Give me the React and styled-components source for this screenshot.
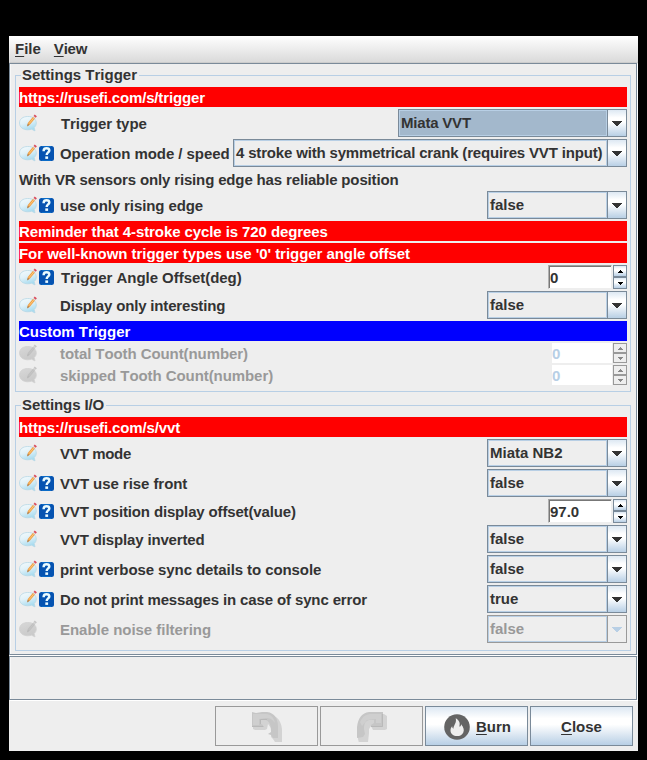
import React from "react";
import styled, { createGlobalStyle, css } from "styled-components";

const Global = createGlobalStyle`
  * { box-sizing: border-box; }
  body { margin: 0; background: #000; }
`;

const metal = "linear-gradient(#dde8f3 0%, #fff 30%, #fff 46%, #b8cfe5 100%)";

const Screen = styled.div`
  width: 647px;
  height: 760px;
  padding: 36px 9px 9px;
  background: #000;
  font: bold 15px/20px "Liberation Sans", Arial, sans-serif;
  font-kerning: none;
  color: #333;
`;
const Frame = styled.main`
  width: 629px;
  height: 715px;
  display: flex;
  flex-direction: column;
  background: #eee;
`;
const MenuBar = styled.nav`
  height: 27px;
  display: flex;
  gap: 13px;
  padding: 3px 6px 0;
  background: linear-gradient(#fff, #dadada);
  border-bottom: 1px solid #ccc;
`;
const MenuItem = styled.span`
  letter-spacing: ${(p) => p.$ls || 0}px;
`;
const Key = styled.span`
  text-decoration: underline;
  text-decoration-thickness: 1px;
  text-underline-offset: 2px;
`;
const Etched = styled.section`
  height: ${(p) => p.$h}px;
  width: 628px;
  border: 1px solid #7a8a99;
  box-shadow: 1px 1px 0 #fff, inset 1px 0 0 #f8f8f8;
  margin-bottom: 1px;
  padding: 0 5px;
  flex: none;
`;
const Group = styled.fieldset`
  width: 616px;
  min-width: 0;
  height: ${(p) => p.$h}px;
  margin: ${(p) => p.$mt}px 0 0;
  padding: 2px 3px 0;
  border: 1px solid #b8cfe5;
  display: block;
`;
const Legend = styled.legend`
  margin-left: 2px;
  padding: 0 2px 0 1px;
  height: 20px;
  white-space: nowrap;
  letter-spacing: ${(p) => p.$ls || 0}px;
`;
const Rows = styled.div`
  display: flex;
  flex-direction: column;
  gap: 2px;
`;
const Banner = styled.div`
  height: 20px;
  padding-top: 1px;
  color: #fff;
  white-space: nowrap;
  background: ${(p) => (p.$blue ? "#00f" : "#f00")};
  letter-spacing: ${(p) => p.$ls || 0}px;
`;
const Note = styled.div`
  height: 20px;
  padding-top: 1px;
  letter-spacing: ${(p) => p.$ls || 0}px;
`;
const Row = styled.div`
  display: flex;
  align-items: center;
  height: ${(p) => p.$h}px;
`;
const Icons = styled.div`
  width: 41px;
  flex: none;
  display: flex;
  align-items: center;
  gap: 2px;
  svg { display: block; flex: none; }
`;
const Label = styled.label`
  flex: 1;
  min-width: 0;
  white-space: nowrap;
  padding-top: 2px;
  padding-left: ${(p) => p.$pl || 0}px;
  color: ${(p) => (p.$off ? "#999" : "#333")};
  letter-spacing: ${(p) => p.$ls || 0}px;
`;
const Combo = styled.div`
  flex: none;
  width: ${(p) => p.$w}px;
  height: 28px;
  display: flex;
  border: 1px solid ${(p) => (p.$off ? "#999" : "#7a8a99")};
`;
const ComboText = styled.span`
  flex: 1;
  min-width: 0;
  padding: 2px 0 0 1px;
  border: 1px solid #b8cfe5;
  white-space: nowrap;
  color: ${(p) => (p.$off ? "#999" : "#333")};
  background: ${(p) => (p.$focus ? "#a3b8cc" : "#eee")};
  letter-spacing: ${(p) => p.$ls || 0}px;
`;
const ComboArrow = styled.span`
  width: 19px;
  flex: none;
  display: flex;
  align-items: center;
  justify-content: center;
  border-left: 1px solid ${(p) => (p.$off ? "#999" : "#7a8a99")};
  background: ${(p) => (p.$off ? "#eee" : metal)};
`;
const Spinner = styled.div`
  flex: none;
  display: flex;
  gap: 1px;
  height: ${(p) => (p.$off ? 20 : 24)}px;
`;
const Field = styled.span`
  width: ${(p) => (p.$off ? 60 : 64)}px;
  background: #fff;
  line-height: 20px;
  color: #333;
  ${(p) =>
    p.$off
      ? css`color: #b8cfe5; padding-top: 1px;`
      : css`
          padding: 2px 0 0;
          border: solid;
          border-width: 1px;
          border-color: #a0a0a0 #eee #eee #b0b0b0;
          box-shadow: inset 1px 1px 0 #777;
          text-indent: 1px;
        `}
`;
const Steps = styled.span`
  width: 14px;
  display: flex;
  flex-direction: column;
`;
const Step = styled.span`
  flex: 1;
  display: flex;
  align-items: center;
  justify-content: center;
  border: 1px solid ${(p) => (p.$off ? "#999" : "#7a8a99")};
  background: ${(p) => (p.$off ? "#eee" : metal)};
`;
const Footer = styled.footer`
  display: flex;
  gap: 2px;
  padding: 5px 5px 0 0;
  justify-content: flex-end;
`;
const Button = styled.button`
  width: 103px;
  height: 40px;
  padding: 1px 0 0 ${(p) => p.$pl || 0}px;
  display: flex;
  align-items: center;
  justify-content: center;
  gap: 6px;
  border: 1px solid ${(p) => (p.$off ? "#999" : "#7a8a99")};
  border-radius: 0;
  background: ${(p) => (p.$off ? "#eee" : metal)};
  font: inherit;
  color: #333;
  svg { display: block; }
`;

const NoteIcon = ({ off }) => (
  <svg width="18" height="18" viewBox="0 0 18 18">
    <defs>
      <linearGradient id={off ? "bg0" : "bg1"} x1="0" y1="0" x2=".4" y2="1">
        <stop offset="0" stopColor={off ? "#d8d8d8" : "#f4fafc"} />
        <stop offset=".5" stopColor={off ? "#d0d0d0" : "#e0f1f8"} />
        <stop offset="1" stopColor={off ? "#cacaca" : "#a9dcf0"} />
      </linearGradient>
    </defs>
    <path
      d="M8.600 2.500C13.600 2.300 17.300 5 17.300 9c0 1.900-.8 3.400-2.100 4.500l.8 3.400-3.500-1.700c-1.200.4-2.500.6-3.900.6C4 15.800.5 13 .5 9s3.500-6.500 8.100-6.500z"
      fill={`url(#${off ? "bg0" : "bg1"})`}
      stroke={off ? "#d2d2d2" : "#b8d8e6"}
      strokeWidth=".8"
    />
    <path d="M8.800 9L14 2.800l2 1.600-5.200 6.300-2.600 1.600z" fill={off ? "#bfbfbf" : "#f0a045"} />
    <path d="M10.100 9.600l5-6" stroke={off ? "#c8c8c8" : "#ffd08a"} strokeWidth=".8" />
    <path d="M14.600 2.100l1.100-1.500 2.200 1.700-1.200 1.400z" fill={off ? "#c6c6c6" : "#d94d5d"} />
    <path d="M14.100 2.600l2 1.600" stroke={off ? "#ccc" : "#cfd5dc"} strokeWidth=".9" />
    <path d="M8.100 12.400l.7-2.600 1.400 1.200z" fill={off ? "#b8b8b8" : "#a07c58"} />
  </svg>
);
const HelpIcon = () => (
  <svg width="15" height="15" viewBox="0 0 15 15">
    <rect width="15" height="15" rx="2.500" fill="#0553b1" />
    <path d="M3 .5h9M3 14.500h9" stroke="#0a6cc8" />
    <path
      d="M4.700 5.200V4.400C4.800 2.900 5.900 2.200 7.500 2.200s2.800.8 2.800 2.200c0 2-2.600 2-2.600 4.500"
      fill="none" stroke="#e9fbff" strokeWidth="2.500"
    />
    <rect x="6.300" y="10.400" width="2.800" height="2.500" fill="#e9fbff" />
  </svg>
);
const Down = ({ off }) => (
  <svg width="10" height="5" viewBox="0 0 10 5" shapeRendering="crispEdges">
    <path d="M0 0h10v1H9v1H8v1H7v1H6v1H4V4H3V3H2V2H1V1H0z" fill={off ? "#b8cfe5" : "#333"} />
  </svg>
);
const Tiny = ({ up, off }) => (
  <svg width="5" height="3" viewBox="0 0 5 3" shapeRendering="crispEdges">
    <path
      d={up ? "M2 0h1v1h1v1h1v1H0V2h1V1h1z" : "M0 0h5v1H4v1H3v1H2V2H1V1H0z"}
      fill={off ? "#888" : "#000"}
    />
  </svg>
);
const TurnIcon = ({ flip }) => (
  <svg width="30" height="30" viewBox="0 0 30 30">
    {flip ? (
      <>
        <path d="M1 27V14l5-9 7-3h14l3 2v13l-2 1H16l-2-4-2 3v4l-1 9-2 1H2z" fill="#d3d3d3" />
        <path d="M0 26V15C1 6 5 1 12 0h14v15H14v-2l3-2V8h-5c-4 1-5 4-5 9l1 5-2 3z" fill="#c6c6c6" />
        <path d="M3 10C6 4 9 2 15 2h9v9h-5V7l-9 1-5 6z" fill="#cfcfcf" />
        <path d="M14 14.500h11.500V2" fill="none" stroke="#b9b9b9" />
      </>
    ) : (
      <>
        <path d="M1 17V4L15 1l9 4c4 3 6 8 6 14v11h-7l-2-3-2-2V16l-3-4-1 5-2 1H3z" fill="#d3d3d3" />
        <path d="M0 0l4 1 6-1h5c8 1 11 7 11 15v11h-5l-2-3-3-1 3-2c0-6-1-10-5-12H9v4l2 1v2H0z" fill="#c6c6c6" />
        <path d="M1 2h13c5 0 8 4 9 9-3-4-5-5-9-5L7 7v6H1z" fill="#cfcfcf" />
        <path d="M0 14.500h11.500M8.500 12V7.500H15" fill="none" stroke="#b9b9b9" />
      </>
    )}
  </svg>
);
const FlameIcon = () => (
  <svg width="26" height="26" viewBox="0 0 26 26">
    <circle cx="13" cy="13" r="12.800" fill="#646464" />
    <path
      d="M11.700 4.300c3.800 2 4.700 5 3.600 8.200 1 .3 1.700-.8 1.800-2.300 2.600 3.300 3.300 5.700 2.200 8.200-1 2.300-3.300 3.700-6.300 3.700-3.500 0-6.500-2.400-6.500-5.700 0-1.900.8-3.100 1.700-4.100 0 1.300.4 2.100 1.200 2.400.1-3.600 3.600-5.700 2.300-10.400z"
      fill="#eee"
    />
  </svg>
);

function Setting({ label, ls, pl, help, off, h = 28, children }) {
  return (
    <Row $h={h}>
      <Icons>
        <NoteIcon off={off} />
        {help && <HelpIcon />}
      </Icons>
      <Label $ls={ls} $pl={pl} $off={off}>{label}</Label>
      {children}
    </Row>
  );
}
function Select({ value, w = 140, off, focus, ls }) {
  return (
    <Combo $w={w} $off={off}>
      <ComboText $off={off} $focus={focus} $ls={ls}>{value}</ComboText>
      <ComboArrow $off={off}><Down off={off} /></ComboArrow>
    </Combo>
  );
}
function Number({ value, off }) {
  return (
    <Spinner $off={off}>
      <Field $off={off}>{value}</Field>
      <Steps>
        <Step $off={off}><Tiny up off={off} /></Step>
        <Step $off={off}><Tiny off={off} /></Step>
      </Steps>
    </Spinner>
  );
}

export default function App() {
  return (
    <Screen>
      <Global />
      <Frame>
        <MenuBar>
          <MenuItem><Key>F</Key>ile</MenuItem>
          <MenuItem $ls={-0.25}><Key>V</Key>iew</MenuItem>
        </MenuBar>
        <Etched $h={592}>
          <Group $h={327} $mt={1}>
            <Legend>Settings Trigger</Legend>
            <Rows>
              <Banner $ls={-0.15}>https://rusefi.com/s/trigger</Banner>
              <Setting label="Trigger type" pl={1} ls={-0.08}><Select value="Miata VVT" w={229} focus ls={-0.2} /></Setting>
              <Setting label="Operation mode / speed" ls={-0.06} help>
                <Select value="4 stroke with symmetrical crank (requires VVT input)" w={394} ls={-0.17} />
              </Setting>
              <Note $ls={-0.15}>With VR sensors only rising edge has reliable position</Note>
              <Setting label="use only rising edge" ls={-0.1} help><Select value="false" /></Setting>
              <Banner $ls={-0.09}>Reminder that 4-stroke cycle is 720 degrees</Banner>
              <Banner $ls={-0.05}>For well-known trigger types use '0' trigger angle offset</Banner>
              <Setting label="Trigger Angle Offset(deg)" ls={-0.04} pl={1} help h={24}><Number value="0" /></Setting>
              <Setting label="Display only interesting" ls={-0.17}><Select value="false" /></Setting>
              <Banner $blue $ls={-0.03}>Custom Trigger</Banner>
              <Setting label="total Tooth Count(number)" ls={-0.08} off h={20}><Number value="0" off /></Setting>
              <Setting label="skipped Tooth Count(number)" ls={-0.07} off h={20}><Number value="0" off /></Setting>
            </Rows>
          </Group>
          <Group $h={256} $mt={3}>
            <Legend $ls={-0.1}>Settings I/O</Legend>
            <Rows>
              <Banner $ls={-0.13}>https://rusefi.com/s/vvt</Banner>
              <Setting label="VVT mode" ls={-0.3}><Select value="Miata NB2" /></Setting>
              <Setting label="VVT use rise front" ls={-0.06} help><Select value="false" /></Setting>
              <Setting label="VVT position display offset(value)" ls={-0.15} help h={24}><Number value="97.0" /></Setting>
              <Setting label="VVT display inverted" ls={-0.15}><Select value="false" /></Setting>
              <Setting label="print verbose sync details to console" ls={-0.08} help><Select value="false" /></Setting>
              <Setting label="Do not print messages in case of sync error" ls={-0.13} help><Select value="true" /></Setting>
              <Setting label="Enable noise filtering" ls={-0.03} off><Select value="false" off /></Setting>
            </Rows>
          </Group>
        </Etched>
        <Etched $h={44} />
        <Footer>
          <Button $off><TurnIcon /></Button>
          <Button $off><TurnIcon flip /></Button>
          <Button $pl={2}><FlameIcon /><span><Key>B</Key>urn</span></Button>
          <Button><span><Key>C</Key>lose</span></Button>
        </Footer>
      </Frame>
    </Screen>
  );
}
